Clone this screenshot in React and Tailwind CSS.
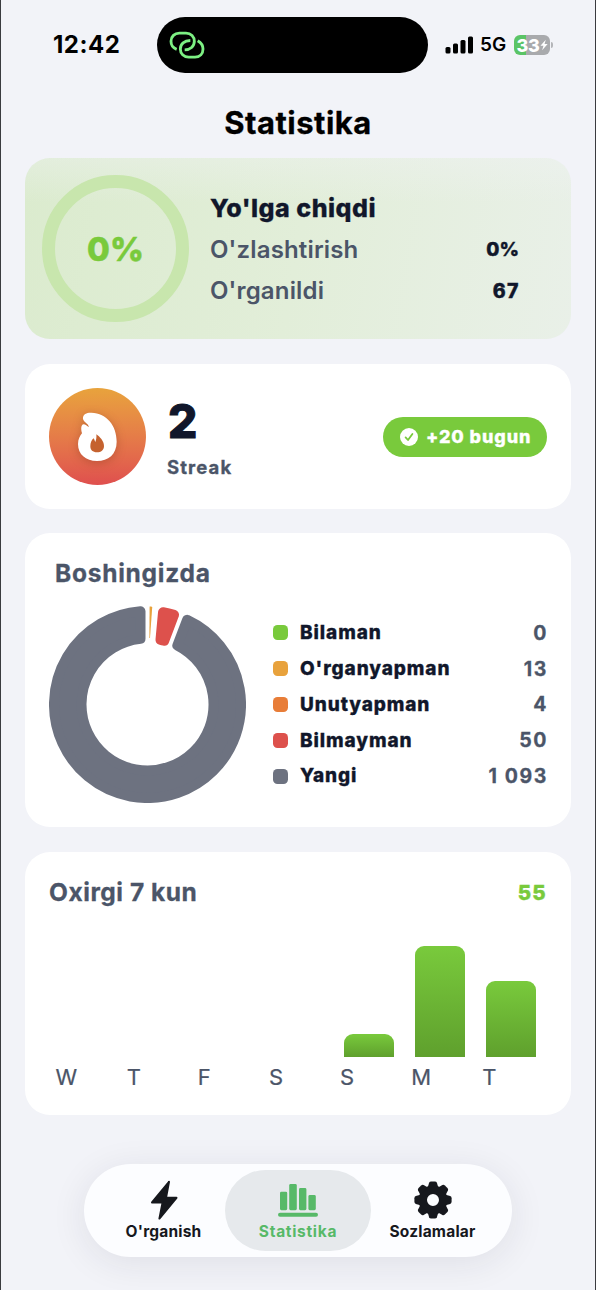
const LEGEND = [
  { label: 'Bilaman', value: 0, color: '#79ca3c' },
  { label: "O'rganyapman", value: 13, color: '#e8a23c' },
  { label: 'Unutyapman', value: 4, color: '#e87d38' },
  { label: 'Bilmayman', value: 50, color: '#dd514c' },
  { label: 'Yangi', value: 1093, color: '#6d7280' },
]

const WEEK = [
  { day: 'W', height: 0 },
  { day: 'T', height: 0 },
  { day: 'F', height: 0 },
  { day: 'S', height: 0 },
  { day: 'S', height: 23 },
  { day: 'M', height: 111 },
  { day: 'T', height: 76.5 },
]

const formatCount = (n) => String(n).replace(/\B(?=(\d{3})+$)/g, ' ')

function LinkIcon() {
  return (
    <svg viewBox="505 90 108 90" className="h-[30px] w-9" fill="none" stroke="#7df083" strokeWidth="8.5" strokeLinecap="butt">
      <path d="M528 148C514 143 511 133 511 124C511 109 522 99.500 536 99.500H556C571 99.500 581 110 581 124C581 139 569 149.500 552 149.500" />
      <path d="M569 121.500C551 121.500 539 132 539 147C539 161 549 171.500 564 171.500H583C598 171.500 607 161 607 147C607 136 602 128 591 122" />
    </svg>
  )
}

function StatusBar() {
  return (
    <header className="flex h-[90px] items-center pl-[52px]">
      <span className="w-[104px] text-[24px] font-bold tracking-[0.5px]">12:42</span>
      <div className="flex h-14 w-[271px] items-center rounded-full bg-black pl-3">
        <LinkIcon />
      </div>
      <svg viewBox="0 0 28 18" className="ml-[17px] h-[18px] w-7">
        <rect x="0.5" y="11" width="5" height="6.5" rx="1.5" />
        <rect x="8" y="7.5" width="5" height="10" rx="1.5" />
        <rect x="15.5" y="4" width="5" height="13.5" rx="1.5" />
        <rect x="23" y="0.5" width="5" height="17" rx="1.5" />
      </svg>
      <span className="ml-[7px] w-[27px] pt-px text-[19px] font-semibold tracking-[0px]">5G</span>
      <div className="ml-[7px] flex h-5 w-9 items-center justify-center rounded-[6px] bg-[linear-gradient(90deg,#5bc466_34%,#a9aaad_34%)] text-white">
        <span className="text-[18px] font-extrabold tracking-[-0.2px]">33</span>
        <svg viewBox="0 0 9 12" className="h-3 w-[8px]" fill="currentColor">
          <path d="M6.5 0 0.5 6.800h3.400L2.400 12 8.600 5H5.100z" />
        </svg>
      </div>
      <span className="ml-px h-[6px] w-[2px] rounded-r-full bg-[#b4b5b9]" />
    </header>
  )
}

function ProgressCard() {
  return (
    <section className="flex h-[181px] items-center rounded-[25px] bg-[linear-gradient(180deg,rgba(242,243,248,.35),rgba(242,243,248,0)_25%),linear-gradient(100deg,#dbebce,#e2eed9_50%,#e9f0e8)] pl-[17px] pr-[52px]">
      <div className="flex size-[147px] shrink-0 items-center justify-center rounded-full border-[13.5px] border-[#c8e6ad]">
        <span className="pt-0.5 text-[33px] font-extrabold text-[#79ca3c] [-webkit-text-stroke:0.5px]">0%</span>
      </div>
      <div className="ml-[21px] flex-1 pt-[2.5px]">
        <h2 className="text-[25px] leading-[41.4px] font-extrabold tracking-[0.5px] text-[#11172b] [-webkit-text-stroke:0.3px]">Yo'lga chiqdi</h2>
        <div className="flex h-[41.4px] items-center justify-between">
          <span className="text-[24px] font-semibold tracking-[0.15px] text-[#4b5568]">O'zlashtirish</span>
          <span className="text-[19px] font-extrabold text-[#11172b] [-webkit-text-stroke:0.4px]">0%</span>
        </div>
        <div className="flex h-[41.4px] items-center justify-between">
          <span className="text-[24px] font-semibold tracking-[0.15px] text-[#4b5568]">O'rganildi</span>
          <span className="-mr-px text-[19.5px] font-extrabold tracking-[1.5px] text-[#11172b] [-webkit-text-stroke:0.4px]">67</span>
        </div>
      </div>
    </section>
  )
}

function FlameBadge() {
  return (
    <div className="size-[97px] rounded-full bg-linear-to-b from-[#e8a33c] to-[#df4f4e]">
      <svg viewBox="88 97 291 291" className="size-full drop-shadow-[0_2px_5px_rgba(120,50,20,0.35)]">
        <path
          fill="#fff"
          d="M190 190C188 176 202 170 215 171C262 173 291 210 291 258C291 296 266 316 232 316C198 316 175 296 175 265C175 250 181 241 187 233C183 220 184 208 191 206C198 206 202 212 208 214C205 203 192 199 190 190Z"
        />
        <path
          fill="#c5622f"
          d="M230 236C240 243 253 256 253 271C253 283 244 290 232 290C219 290 212 283 212 272C212 262 216 252 222 248C224 251 225 256 227 259C230 252 231 244 230 236Z"
        />
      </svg>
    </div>
  )
}

function StreakCard() {
  return (
    <section className="mt-[25px] flex h-[145px] items-center rounded-[25px] bg-white px-6">
      <FlameBadge />
      <div className="ml-[21px] flex-1 pt-[5px]">
        <p className="pl-px text-[46px] leading-[56px] font-extrabold text-[#11172b] [-webkit-text-stroke:1px]">2</p>
        <p className="text-[18.5px] leading-[37px] font-bold tracking-[1.1px] text-[#4b5568] [-webkit-text-stroke:0.3px]">Streak</p>
      </div>
      <div className="flex h-10 w-[164px] items-center rounded-full bg-[#79ca3c] pl-[17px] text-white">
        <svg viewBox="0 0 18 18" className="size-[18px]">
          <circle cx="9" cy="9" r="9" fill="#fff" />
          <path d="M5.600 9.400 8 12l4.400-6" fill="none" stroke="#79ca3c" strokeWidth="1.8" strokeLinecap="round" strokeLinejoin="round" />
        </svg>
        <span className="ml-2 text-[18px] font-extrabold tracking-[0.9px] whitespace-nowrap [-webkit-text-stroke:0.3px]">+20 bugun</span>
      </div>
    </section>
  )
}

const TOTAL = 1160
const CENTER = 98.5

// point on a slice edge, pushed off the radial line by `offset` px
function edgePoint(radius, angle, offset) {
  const along = Math.sqrt(radius * radius - offset * offset)
  const x = CENTER + along * Math.sin(angle) + offset * Math.cos(angle)
  const y = CENTER - along * Math.cos(angle) + offset * Math.sin(angle)
  return `${x.toFixed(2)} ${y.toFixed(2)}`
}

function Slice({ from, to, color, corner = 5 }) {
  const a = (from / TOTAL) * Math.PI * 2
  const b = (to / TOTAL) * Math.PI * 2
  const outer = 98.5 - corner
  const inner = 61 + corner
  const gap = 2 + corner
  const large = b - a > Math.PI ? 1 : 0
  const d = [
    `M${edgePoint(outer, a, gap)}`,
    `A${outer} ${outer} 0 ${large} 1 ${edgePoint(outer, b, -gap)}`,
    `L${edgePoint(inner, b, -gap)}`,
    `A${inner} ${inner} 0 ${large} 0 ${edgePoint(inner, a, gap)}Z`,
  ].join('')
  return <path d={d} fill={color} stroke={color} strokeWidth={corner * 2} strokeLinejoin="round" />
}

function DonutChart() {
  return (
    <svg viewBox="0 0 197 197" className="size-[197px] shrink-0">
      <path d="M100.600 0.600Q103.200 0 103.200 1.600L101 32L100.400 32Z" fill="#e8a23c" />
      <Slice from={17} to={67} color="#dd514c" />
      <Slice from={67} to={1160} color="#6d7280" />
    </svg>
  )
}

function MemoryCard() {
  return (
    <section className="mt-6 h-[294px] rounded-[25px] bg-white px-6 pt-5">
      <h2 className="pl-[6px] text-[24.5px] leading-[40px] font-bold tracking-[0.75px] text-[#4b5568] [-webkit-text-stroke:0.3px]">Boshingizda</h2>
      <div className="mt-[13px] flex items-center">
        <DonutChart />
        <ul className="ml-[27px] flex-1">
          {LEGEND.map((item) => (
            <li key={item.label} className="flex h-[35.8px] items-center">
              <span className="size-[15px] rounded-[4.5px]" style={{ background: item.color }} />
              <span className="ml-3 flex-1 pt-px text-[19px] font-extrabold tracking-[0.9px] text-[#11172b] [-webkit-text-stroke:0.3px]">{item.label}</span>
              <span className="-mr-px pt-px text-[19.5px] font-bold tracking-[1.6px] text-[#4b5568] [-webkit-text-stroke:0.3px]">
                {formatCount(item.value)}
              </span>
            </li>
          ))}
        </ul>
      </div>
    </section>
  )
}

function WeekCard() {
  return (
    <section className="mt-[25px] h-[263px] rounded-[25px] bg-white px-6 pt-5">
      <div className="flex h-10 items-center justify-between text-[#4b5568]">
        <h2 className="text-[24.5px] font-bold tracking-[0.55px] [-webkit-text-stroke:0.3px]">Oxirgi 7 kun</h2>
        <span className="pt-[3px] text-[20.5px] font-extrabold tracking-[1.3px] text-[#79ca3c] [-webkit-text-stroke:0.4px]">55</span>
      </div>
      <div className="mt-[34px] grid h-[111px] grid-cols-7 items-end justify-items-center">
        {WEEK.map((d, i) => (
          <div key={i} className="w-[50px] rounded-t-[9px] bg-linear-to-b from-[#79ca3c] to-[#5fa02d]" style={{ height: d.height }} />
        ))}
      </div>
      <div className="grid grid-cols-7 text-[22px] leading-[40px] text-[#4b5568] [-webkit-text-stroke:0.2px]">
        {WEEK.map((d, i) => (
          <span key={i} className="pl-[6.5px]">{d.day}</span>
        ))}
      </div>
    </section>
  )
}

const BoltIcon = () => (
  <svg viewBox="0 0 40 40" className="size-10" fill="currentColor" stroke="currentColor" strokeWidth="2" strokeLinejoin="round">
    <path d="M25 1.800 8 22.400H18.600L15.400 38.600 32.500 17.800H22Z" />
  </svg>
)

const BarsIcon = () => (
  <svg viewBox="0 0 40 40" className="size-10" fill="currentColor">
    <rect x="2" y="11.7" width="7.2" height="18.5" rx="1.4" />
    <rect x="11.2" y="4" width="7.6" height="26.2" rx="1.4" />
    <rect x="21" y="8" width="7.4" height="22.2" rx="1.4" />
    <rect x="30.4" y="15" width="7.4" height="15.2" rx="1.4" />
    <rect x="0" y="32.7" width="40" height="4" rx="2" />
  </svg>
)

const GearIcon = () => (
  <svg viewBox="-20 -20 40 40" className="size-10" fill="currentColor">
    <circle r="10.2" fill="none" stroke="currentColor" strokeWidth="8.4" />
    {[0, 45, 90, 135, 180, 225, 270, 315].map((deg) => (
      <path key={deg} transform={`rotate(${deg})`} d="M-5.300-12.500-3.900-17.200Q-3.400-18.600-1.800-18.600H1.800Q3.400-18.600 3.900-17.200L5.300-12.500Z" />
    ))}
  </svg>
)

const TABS = [
  { label: "O'rganish", icon: <BoltIcon />, tracking: 'tracking-[0.2px]' },
  { label: 'Statistika', icon: <BarsIcon />, tracking: 'tracking-[0.7px]', active: true },
  { label: 'Sozlamalar', icon: <GearIcon />, tracking: 'tracking-[0.2px]' },
]

function TabBar() {
  return (
    <nav className="mx-auto mt-[49px] flex h-[93px] w-[428px] items-center justify-center rounded-full bg-[#fcfdff] shadow-[0_6px_36px_rgba(30,35,50,0.09)]">
      {TABS.map((tab) => (
        <button
          key={tab.label}
          type="button"
          className={
            tab.active
              ? 'flex h-[81px] w-[146px] flex-col items-center rounded-full bg-[#e6e9ec] pt-[10px] text-[#57b968]'
              : 'flex h-[81px] w-[123px] flex-col items-center pt-[10px] text-[#16181d]'
          }
        >
          {tab.icon}
          <span className={`text-[15.5px] leading-[23px] font-bold ${tab.tracking}`}>{tab.label}</span>
        </button>
      ))}
    </nav>
  )
}

export default function App() {
  return (
    <div className="h-[1290px] w-[596px] overflow-hidden border-x border-[#3a3b3f] bg-[#f2f3f8] font-['Inter',sans-serif] text-black">
      <StatusBar />
      <h1 className="h-[68px] pt-[10px] text-center text-[31px] leading-[45px] font-bold tracking-[0.5px] [-webkit-text-stroke:0.3px]">Statistika</h1>
      <main className="px-6">
        <ProgressCard />
        <StreakCard />
        <MemoryCard />
        <WeekCard />
      </main>
      <TabBar />
    </div>
  )
}
